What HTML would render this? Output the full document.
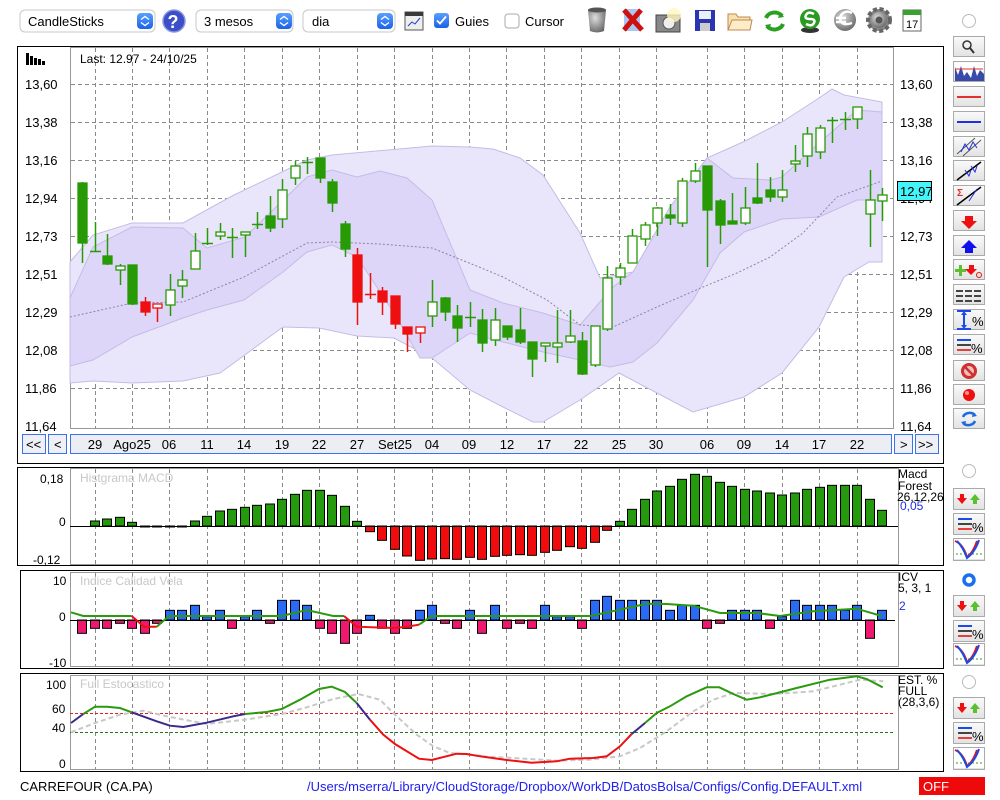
<!DOCTYPE html>
<html><head><meta charset="utf-8">
<style>
html,body{margin:0;padding:0;background:#fff;width:1000px;height:800px;overflow:hidden;font-family:"Liberation Sans",sans-serif;}
svg{display:block}
text{font-family:"Liberation Sans",sans-serif;}
</style></head><body>
<svg id="s" width="1000" height="800" viewBox="0 0 1000 800" xmlns="http://www.w3.org/2000/svg">
<defs>
<linearGradient id="btn" x1="0" y1="0" x2="0" y2="1"><stop offset="0" stop-color="#fafafa"/><stop offset="1" stop-color="#e2e2e2"/></linearGradient>
<linearGradient id="blu" x1="0" y1="0" x2="0" y2="1"><stop offset="0" stop-color="#5aa0ff"/><stop offset="1" stop-color="#1a62e8"/></linearGradient>
<radialGradient id="gr" cx="0.4" cy="0.35" r="0.7"><stop offset="0" stop-color="#ddd"/><stop offset="1" stop-color="#666"/></radialGradient>
</defs>
<g font-size="13">
<rect x="20" y="10" width="135" height="22" rx="5" fill="#fff" stroke="#c8c8c8"/>
<text x="28" y="26">CandleSticks</text>
<rect x="137" y="13" width="16" height="16" rx="4" fill="url(#blu)"/>
<path d="M141 19.5l4-3 4 3M141 22.5l4 3 4-3" stroke="#fff" stroke-width="1.4" fill="none"/>
<circle cx="174" cy="21" r="11" fill="#3c4fc8" stroke="#8a96e0" stroke-width="1.5"/>
<text x="167.5" y="28" font-size="18" font-weight="bold" fill="#fff">?</text>
<rect x="196" y="10" width="97" height="22" rx="5" fill="#fff" stroke="#c8c8c8"/>
<text x="204" y="26">3 mesos</text>
<rect x="276" y="13" width="16" height="16" rx="4" fill="url(#blu)"/>
<path d="M280 19.5l4-3 4 3M280 22.5l4 3 4-3" stroke="#fff" stroke-width="1.4" fill="none"/>
<rect x="303" y="10" width="92" height="22" rx="5" fill="#fff" stroke="#c8c8c8"/>
<text x="312" y="26">dia</text>
<rect x="377" y="13" width="16" height="16" rx="4" fill="url(#blu)"/>
<path d="M381 19.5l4-3 4 3M381 22.5l4 3 4-3" stroke="#fff" stroke-width="1.4" fill="none"/>
<rect x="405" y="12" width="18" height="18" fill="#eee" stroke="#555"/>
<rect x="405" y="12" width="18" height="4" fill="#3a3a3a"/>
<path d="M408 26l4-4 3 2 5-6" stroke="#2040d0" fill="none"/>
<rect x="434" y="13" width="15" height="15" rx="3" fill="url(#blu)"/>
<path d="M437 20.5l3 3 6-7" stroke="#fff" stroke-width="1.8" fill="none"/>
<text x="455" y="26">Guies</text>
<rect x="505" y="14" width="14" height="14" rx="3" fill="#fff" stroke="#aaa"/>
<text x="525" y="26">Cursor</text>
</g>
<path d="M588 10h18l-2 21q-7 3-14 0z" fill="url(#gr)"/>
<ellipse cx="597" cy="10" rx="9" ry="2.5" fill="#555"/>
<rect x="624" y="9" width="16" height="22" fill="#a8c8f0"/>
<path d="M624 10l18 20M641 10l-17 20" stroke="#d01010" stroke-width="5"/>
<rect x="656" y="15" width="24" height="17" fill="#888" stroke="#444"/>
<circle cx="669" cy="23" r="6" fill="#eee" stroke="#555"/>
<circle cx="674" cy="15" r="7" fill="#fff8c0" opacity="0.8"/>
<rect x="695" y="10" width="20" height="21" fill="#2a36b0"/>
<rect x="699" y="11" width="12" height="8" fill="#e8eefc"/>
<rect x="700" y="23" width="10" height="8" fill="#ccc"/>
<path d="M728 14h8l2 3h12v13h-22z" fill="#f8e0b0" stroke="#c08850"/>
<path d="M728 30l4-10h20l-2 10z" fill="#fcecc8" stroke="#c08850"/>
<path d="M766 18a9 8 0 0 1 16-2M783 24a9 8 0 0 1-16 2" stroke="#2aa020" stroke-width="4" fill="none"/>
<path d="M780 12l4 5-6 1zM769 30l-4-5 6-1z" fill="#2aa020"/>
<ellipse cx="810" cy="30" rx="9" ry="3" fill="#333"/>
<circle cx="810" cy="19" r="10" fill="#2a9a20"/>
<path d="M814 14q-6-3-8 1t4 4 4 4-8 1" stroke="#fff" stroke-width="2.5" fill="none"/>
<circle cx="845" cy="20" r="11" fill="url(#gr)"/>
<path d="M852 13q-8-4-12 4 0 10 12 6M836 18h10M836 22h10" stroke="#fff" stroke-width="2.5" fill="none"/>
<circle cx="879" cy="20" r="11" fill="#888" stroke="#666" stroke-width="4" stroke-dasharray="4 2.5"/>
<circle cx="879" cy="20" r="8" fill="url(#gr)"/>
<circle cx="879" cy="20" r="3.5" fill="#555"/>
<rect x="903" y="10" width="18" height="21" fill="#fff" stroke="#666"/>
<rect x="903" y="10" width="18" height="5" fill="#3aa030"/>
<text x="906" y="28" font-size="11">17</text>
<circle cx="969" cy="21" r="6.5" fill="#fff" stroke="#bbb"/>

<rect x="17.5" y="46.5" width="926" height="417" fill="#fff" stroke="#000"/>
<rect x="70.5" y="47.5" width="823" height="381" fill="#fff" stroke="#999"/>
<g id="grid" stroke="#8a8a8a" stroke-dasharray="4 3" stroke-width="1"></g>
<polygon id="outer" fill="#e9e6fb" stroke="#c4bce6"/>
<polygon id="inner" fill="#ddd6f8" stroke="#c4bce6"/>
<polyline id="mid" fill="none" stroke="#8a84a8" stroke-dasharray="2 2"/>
<g id="candles"></g>
<g font-size="13">
<text x="80" y="63" font-size="12">Last: 12.97 - 24/10/25</text>
<g fill="#000"><rect x="26" y="53" width="3" height="12"/><rect x="30" y="56" width="3" height="9"/><rect x="34" y="58" width="3" height="7"/><rect x="38" y="59" width="3" height="6"/><rect x="42" y="61" width="3" height="4"/></g>
<g id="ylab"></g>
<rect x="897.5" y="181.5" width="34" height="19" fill="#44f4f8" stroke="#000"/>
<text x="900" y="196">12,97</text>
</g>
<g font-size="13">
<rect x="22.5" y="434.5" width="23" height="19" fill="#eef0f6" stroke="#3a72e8"/>
<text x="26" y="449">&lt;&lt;</text>
<rect x="48.5" y="434.5" width="18" height="19" fill="#eef0f6" stroke="#3a72e8"/>
<text x="54" y="449">&lt;</text>
<rect x="70.5" y="434.5" width="821" height="19" fill="#eceef4" stroke="#3a72e8"/>
<rect x="894.5" y="434.5" width="18" height="19" fill="#eef0f6" stroke="#3a72e8"/>
<text x="900" y="449">&gt;</text>
<rect x="915.5" y="434.5" width="23" height="19" fill="#eef0f6" stroke="#3a72e8"/>
<text x="918" y="449">&gt;&gt;</text>
<g text-anchor="middle">
<text x="95" y="449">29</text><text x="132" y="449">Ago25</text><text x="169" y="449">06</text><text x="207" y="449">11</text><text x="244" y="449">14</text><text x="282" y="449">19</text><text x="319" y="449">22</text><text x="357" y="449">27</text><text x="395" y="449">Set25</text><text x="432" y="449">04</text><text x="469" y="449">09</text><text x="507" y="449">12</text><text x="544" y="449">17</text><text x="581" y="449">22</text><text x="619" y="449">25</text><text x="656" y="449">30</text><text x="707" y="449">06</text><text x="744" y="449">09</text><text x="782" y="449">14</text><text x="819" y="449">17</text><text x="857" y="449">22</text>
</g></g>

<rect x="17.5" y="467.5" width="926" height="98" fill="#fff" stroke="#000"/>
<rect x="70.5" y="468.5" width="828" height="96" fill="#fff" stroke="#999"/>
<g id="grid2" stroke="#8a8a8a" stroke-dasharray="4 3"></g>
<text x="80" y="482" font-size="12" fill="#c8c8c8">Histgrama MACD</text>
<g id="macd"></g>
<line x1="70" y1="526.5" x2="898" y2="526.5" stroke="#000"/>
<g font-size="12"><text x="40" y="483">0,18</text><text x="59" y="526">0</text><text x="33" y="564">-0,12</text>
<text x="898" y="478">Macd</text><text x="898" y="490">Forest</text><text x="897" y="501">26,12,26</text><text x="900" y="510" fill="#2030e0">0,05</text></g>

<rect x="20.5" y="570.5" width="923" height="98" fill="#fff" stroke="#000"/>
<rect x="70.5" y="572.5" width="828" height="94" fill="#fff" stroke="#999"/>
<g id="grid3" stroke="#8a8a8a" stroke-dasharray="4 3"></g>
<text x="80" y="585" font-size="12" fill="#c8c8c8">Indice Calidad Vela</text>
<g id="icv"></g>
<line x1="70" y1="620.5" x2="895" y2="620.5" stroke="#000"/>
<g id="icvl"></g>
<g font-size="12"><text x="53" y="585">10</text><text x="59" y="621">0</text><text x="49" y="667">-10</text>
<text x="898" y="581">ICV</text><text x="898" y="592">5, 3, 1</text><text x="899" y="610" fill="#2030e0">2</text></g>

<rect x="20.5" y="673.5" width="923" height="98" fill="#fff" stroke="#000"/>
<rect x="70.5" y="675.5" width="828" height="94" fill="#fff" stroke="#999"/>
<g id="grid4" stroke="#8a8a8a" stroke-dasharray="4 3"></g>
<line x1="70" y1="713.5" x2="895" y2="713.5" stroke="#e02020" stroke-dasharray="3 2"/>
<line x1="70" y1="732.5" x2="895" y2="732.5" stroke="#207a10" stroke-dasharray="3 2"/>
<text x="80" y="688" font-size="12" fill="#c8c8c8">Full Estocastico</text>
<polyline id="sg" fill="none" stroke="#c8c8c8" stroke-width="2" stroke-dasharray="5 3"/>
<g id="stoch"></g>
<g font-size="12"><text x="46" y="689">100</text><text x="52" y="713">60</text><text x="52" y="732">40</text><text x="59" y="768">0</text>
<text x="898" y="684">EST. %</text><text x="898" y="695">FULL</text><text x="898" y="706">(28,3,6)</text></g>

<text x="20" y="791" font-size="13">CARREFOUR (CA.PA)</text>
<text x="307" y="791" font-size="13" fill="#2020f0">/Users/mserra/Library/CloudStorage/Dropbox/WorkDB/DatosBolsa/Configs/Config.DEFAULT.xml</text>
<rect x="919" y="777" width="66" height="18" fill="#ee0a0a"/>
<text x="923" y="791" font-size="13" fill="#fff">OFF</text>

<g id="rc"></g>
<circle cx="969" cy="471" r="6.5" fill="#fff" stroke="#bbb"/>
<circle cx="969" cy="580" r="5" fill="#fff" stroke="#1a6ff0" stroke-width="3.5"/>
<circle cx="969" cy="682" r="6.5" fill="#fff" stroke="#bbb"/>
</svg>
<script>
var NS="http://www.w3.org/2000/svg";
function el(p,t,a){var e=document.createElementNS(NS,t);for(var k in a)e.setAttribute(k,a[k]);document.getElementById(p).appendChild(e);return e;}
var vx=[95,132,169,207,244,282,319,357,394,432,469,506,544,581,619,656,707,744,782,819,857];
var hy=[84,122,160,198,236,274,312,350,388];
vx.forEach(function(x){el('grid','line',{x1:x+.5,y1:48,x2:x+.5,y2:428});
el('grid2','line',{x1:x+.5,y1:469,x2:x+.5,y2:564});
el('grid3','line',{x1:x+.5,y1:573,x2:x+.5,y2:666});
el('grid4','line',{x1:x+.5,y1:676,x2:x+.5,y2:769});});
hy.forEach(function(y){el('grid','line',{x1:71,y1:y+.5,x2:893,y2:y+.5});});
var labs=["13,60","13,38","13,16","12,94","12,73","12,51","12,29","12,08","11,86","11,64"];
labs.forEach(function(l,i){var y=[84,122,160,198,236,274,312,350,388,426][i];
el('ylab','text',{x:25,y:y+5}).textContent=l;el('ylab','text',{x:900,y:y+5}).textContent=l;});
var ou=[[70,262],[93,235],[132,223],[183,223],[232,196],[307,160],[332,155],[432,146],[470,147],[493,149],[520,158],[543,175],[580,233],[600,278],[633,272],[670,207],[707,158],[743,142],[782,122],[819,98],[832,89],[844,95],[882,102]];
var ol=[[70,383],[93,381],[132,383],[183,381],[220,373],[283,327],[319,328],[357,336],[394,338],[432,358],[470,390],[503,407],[533,422],[543,422],[580,400],[619,373],[657,393],[693,412],[744,397],[782,373],[819,327],[844,277],[869,262],[882,262]];
var iu=[[70,298],[93,247],[132,227],[183,228],[207,248],[245,237],[307,177],[332,170],[357,177],[380,171],[407,178],[432,200],[470,290],[503,303],[543,313],[580,325],[613,287],[633,272],[670,207],[707,158],[733,178],[770,180],[782,177],[819,143],[857,110],[882,112]];
var il=[[70,366],[93,360],[132,337],[183,318],[207,310],[244,300],[283,272],[307,252],[332,245],[357,257],[394,313],[420,358],[432,358],[470,333],[503,342],[543,352],[580,360],[610,367],[633,362],[657,343],[693,300],[720,253],[744,232],[782,219],[819,217],[857,200],[882,200]];
function poly(u,l){return u.concat(l.slice().reverse()).map(function(p){return p.join(',')}).join(' ');}
document.getElementById('outer').setAttribute('points',poly(ou,ol));
document.getElementById('inner').setAttribute('points',poly(iu,il));
document.getElementById('mid').setAttribute('points',[[70,317],[132,303],[183,302],[244,277],[307,243],[332,242],[380,244],[432,248],[479,267],[503,277],[547,300],[580,325],[613,327],[657,307],[703,287],[737,273],[770,257],[803,233],[837,197],[882,181]].map(function(p){return p.join(',')}).join(' '));
var C=[[183,243,182,263,'g'],[251,251,222,251,'d'],[256,264,234,265,'g'],[266,270,264,285,'w'],[265,304,265,305,'g'],[302,312,297,316,'r'],[304,308,304,322,'o'],[290,305,274,316,'w'],[280,286,270,298,'w'],[251,269,233,269,'w'],[243,243,228,245,'d'],[232,236,223,240,'w'],[237,237,228,258,'d'],[232,234,232,257,'w'],[224,224,212,229,'d'],[216,228,196,232,'g'],[190,219,179,228,'w'],[166,178,161,185,'w'],[162,162,157,174,'d'],[158,178,158,183,'g'],[182,203,179,212,'g'],[224,249,221,257,'g'],[255,302,248,325,'r'],[294,294,273,299,'rd'],[291,302,287,315,'r'],[296,324,296,329,'r'],[327,334,327,352,'r'],[327,333,327,343,'o'],[302,316,280,327,'w'],[298,312,297,321,'g'],[316,328,305,342,'g'],[317,317,302,327,'d'],[320,343,309,352,'g'],[320,340,308,346,'w'],[326,337,326,340,'g'],[330,342,308,344,'g'],[342,359,342,377,'g'],[343,346,343,362,'w'],[343,347,310,363,'w'],[336,342,310,343,'w'],[341,374,332,375,'g'],[326,365,326,367,'w'],[278,329,266,331,'w'],[268,277,263,285,'w'],[236,263,229,263,'w'],[225,239,222,246,'w'],[208,223,207,236,'w'],[215,217,204,225,'g'],[181,223,178,227,'w'],[171,181,163,183,'w'],[166,210,166,267,'g'],[201,225,199,244,'g'],[221,223,193,224,'g'],[208,223,187,225,'w'],[198,203,163,204,'g'],[190,197,177,202,'g'],[190,197,170,202,'w'],[161,163,145,172,'w'],[134,156,127,167,'w'],[128,152,125,159,'w'],[120,120,117,143,'d'],[119,119,112,130,'d'],[107,119,107,129,'w'],[200,214,170,247,'w'],[195,201,188,221,'w']];
C.forEach(function(c,i){var x=Math.round(82+12.5*i);var t=c[4];var col=(t=='r'||t=='o'||t=='rd')?'#ee1010':'#279a05';
el('candles','line',{x1:x+.5,y1:c[2],x2:x+.5,y2:c[3],stroke:col,'stroke-width':1.5});
if(t=='d'||t=='rd'){el('candles','line',{x1:x-5,y1:c[0]+.5,x2:x+6,y2:c[0]+.5,stroke:col,'stroke-width':1.5});}
else{var h=Math.max(c[1]-c[0],3);el('candles','rect',{x:x-4,y:c[0],width:9,height:h,fill:(t=='w'||t=='o')?'#fff':col,stroke:col,'stroke-width':1.3});}});
var M=[null,303,297,292,307,318,321,321,318,303,289,273,268,262,256,252,238,223,211,211,226,259,304,335,361,388,408,421,417,416,418,412,418,409,406,404,406,397,391,380,385,367,331,304,268,238,213,199,178,163,169,187,199,208,213,219,225,219,208,202,196,196,196,238,271];
M.forEach(function(v,i){if(v==null)return;var x=Math.round(82+12.5*i);var y=v/3+420;var z=526;
var top=Math.min(y,z),h=Math.abs(y-z);if(h<1)h=1;
el('macd','rect',{x:x-4.5,y:top,width:9,height:h,fill:y<z?'#269a0e':'#f00c0c',stroke:'#000','stroke-width':1});});
var I=[196,181,181,166,181,196,166,127,127,112,146,127,181,146,127,166,97,97,112,181,196,226,196,142,181,196,181,127,112,166,181,127,196,112,181,166,181,112,146,146,181,97,85,97,97,97,97,127,112,112,181,166,127,127,127,181,146,97,112,112,112,127,112,211,127];
I.forEach(function(v,i){var x=Math.round(82+12.5*i);var y=568+v/3,z=620;
el('icv','rect',{x:x-4.5,y:Math.min(y,z),width:9,height:Math.abs(y-z),fill:y<z?'#2b6af5':'#f0186e',stroke:'#000','stroke-width':1});});
function pts(a,ox){return a.map(function(p){return (ox+p[0]/3).toFixed(1)+','+(568+p[1]/3).toFixed(1)}).join(' ');}
function pl(g,a,ox,col,w){el(g,'polyline',{points:pts(a,ox),fill:'none',stroke:col,'stroke-width':w});}
pl('icvl',[[213,133],[250,144],[395,144]],0,'#2a9a10',2);
pl('icvl',[[395,144],[432,176],[470,176]],0,'#ee1010',2);
pl('icvl',[[470,176],[507,144],[845,144],[920,126],[1000,144],[1032,144]],0,'#2a9a10',2);
pl('icvl',[[1032,144],[1070,176],[1182,180],[1220,176],[1257,170]],0,'#ee1010',2);
pl('icvl',[[1257,170],[1295,144],[1500,144]],0,'#2a9a10',2);
pl('icvl',[[0,144],[330,144],[420,125],[500,107],[560,108],[640,113],[720,135],[830,135],[900,144],[1000,130],[1130,122],[1205,144]],480,'#2a9a10',2);
document.getElementById('sg').setAttribute('points',pts([[213,493],[285,465],[360,440],[430,428],[500,445],[620,468],[735,455],[850,437],[920,418],[1000,393],[1075,378],[1140,395],[1185,440],[1250,500],[1300,535],[1350,555],[1440,563]],0)+' '+pts([[0,565],[100,570],[230,578],[330,575],[420,565],[480,540],[560,490],[640,430],[700,395],[760,375],[880,378],[1000,370],[1080,350],[1140,335],[1210,340]],480));
var G='#2a9a10',B='#3a2a8a',R='#ee1010';
pl('stoch',[[213,465],[250,438]],0,B,2);
pl('stoch',[[250,438],[285,416],[320,416],[360,420],[395,433]],0,G,2);
pl('stoch',[[395,433],[470,460],[510,473],[550,477],[620,464],[700,445],[735,438]],0,B,2);
pl('stoch',[[735,438],[800,432],[845,423],[900,395],[957,363],[995,356],[1035,372],[1070,405]],0,G,2);
pl('stoch',[[1070,405],[1110,455]],0,B,2);
pl('stoch',[[1110,455],[1150,500],[1185,528],[1257,572],[1295,576],[1370,557],[1400,558],[1440,565]],0,R,2);
pl('stoch',[[0,565],[80,576],[155,584],[230,580],[270,572],[340,570],[380,565],[420,535],[455,498]],480,R,2);
pl('stoch',[[455,498],[495,465]],480,B,2);
pl('stoch',[[495,465],[530,435],[570,415],[620,385],[680,358],[718,358],[760,378],[800,395],[840,388],[880,378],[950,360],[1050,335],[1130,325],[1160,333],[1208,358]],480,G,2);
function btn(y,h,inner){var g=document.getElementById('rc');el('rc','rect',{x:953.5,y:y+.5,width:31,height:h,fill:'url(#btn)',stroke:'#aaa'});
var gg=document.createElementNS(NS,'g');gg.setAttribute('transform','translate(953,'+y+')');gg.innerHTML=inner;g.appendChild(gg);}
var ys=[36,61,86,111,136,160,185,210,235,259,284,309,334,360,384,408];
var icons=[
'<circle cx="14" cy="9" r="4" fill="none" stroke="#333" stroke-width="1.5"/><path d="M17 12l4 5" stroke="#333" stroke-width="2"/>',
'<rect x="2" y="2" width="28" height="18" fill="#fff"/><path d="M2 20V6l3 8 3-9 3 10 3-4 4 6 3-12 3 10 3-6 4 4V20z" fill="#3a4aa8"/><path d="M2 8h28" stroke="#e03030"/>',
'<path d="M4 11h24" stroke="#e03030" stroke-width="2"/>',
'<path d="M4 11h24" stroke="#2030e0" stroke-width="2"/>',
'<path d="M4 18l18-16M10 20l18-16" stroke="#555"/><path d="M8 16l4-8 4 6 4-8 4 6" stroke="#2030e0" fill="none"/>',
'<path d="M4 20l24-18" stroke="#000" stroke-width="1.5"/><path d="M12 10l4 6 2-6M18 6l4 6 2-6" stroke="#2030e0" fill="none"/>',
'<path d="M4 20l24-18" stroke="#000" stroke-width="1.5"/><text x="4" y="11" font-size="10" fill="#e03030" font-weight="bold">Σ</text><path d="M16 16l4-6M20 10l4-6" stroke="#2030e0"/>',
'<path d="M12 6h8v5h4l-8 8-8-8h4z" fill="#ee1010"/>',
'<path d="M12 18h8v-5h4l-8-8-8 8h4z" fill="#1010ee"/>',
'<path d="M6 6h3v4h4v3H9v4H6v-4H2v-3h4z" fill="#5ac030"/><path d="M16 6h5v4h3l-6 6-6-6h4z" fill="#ee1010"/><circle cx="26" cy="16" r="2.5" fill="none" stroke="#ee1010"/>',
'<path d="M3 7h7M12 7h7M21 7h7M3 12h7M12 12h7M21 12h7M3 17h7M12 17h7M21 17h7" stroke="#444" stroke-width="2"/>',
'<path d="M4 2h14M4 20h14M11 4v14" stroke="#1a4ae8" stroke-width="2"/><path d="M8 6l3-4 3 4zM8 16l3 4 3-4z" fill="#1a4ae8"/><text x="19" y="17" font-size="13">%</text>',
'<path d="M4 6h14" stroke="#1a4ae8" stroke-width="2"/><path d="M4 11h14" stroke="#444" stroke-width="2"/><path d="M4 16h14" stroke="#e04040" stroke-width="2"/><text x="18" y="19" font-size="13">%</text>',
'<circle cx="16" cy="11" r="8" fill="#d03030"/><circle cx="16" cy="11" r="5" fill="#f0c0c0"/><path d="M12 7l8 8" stroke="#d03030" stroke-width="2.5"/>',
'<circle cx="16" cy="11" r="6" fill="#ee1010"/><circle cx="14" cy="9" r="2" fill="#ff9090"/>',
'<path d="M10 9a7 6 0 0 1 12-2M22 13a7 6 0 0 1-12 2" stroke="#1a6ae0" stroke-width="2.5" fill="none"/><path d="M20 4l4 4-5 1zM12 18l-4-4 5-1z" fill="#1a6ae0"/>'
];
ys.forEach(function(y,i){btn(y,20,icons[i]);});
var ud='<path d="M7 6h4v4h3l-5 6-5-6h3z" fill="#ee1010"/><path d="M20 16h4v-4h3l-5-6-5 6h3z" fill="#5ac030"/>';
var pc='<path d="M5 6h14" stroke="#1a4ae8" stroke-width="2"/><path d="M5 11h14" stroke="#444" stroke-width="2"/><path d="M5 16h14" stroke="#e04040" stroke-width="2"/><text x="19" y="19" font-size="13">%</text>';
var vv='<rect x="1" y="1" width="30" height="20" fill="#fff"/><path d="M3 16h26" stroke="#3a9a20" stroke-dasharray="2 2"/><path d="M2 3q8 3 12 16q6-4 10-16" stroke="#ee1010" stroke-width="2" fill="none"/><path d="M4 3q6 6 10 17q8-6 12-18" stroke="#1a4ae8" stroke-width="2" fill="none"/>';
[[488,513,538],[595,620,643],[697,722,747]].forEach(function(a){btn(a[0],21,ud);btn(a[1],21,pc);btn(a[2],22,vv);});
</script>
</body></html>
